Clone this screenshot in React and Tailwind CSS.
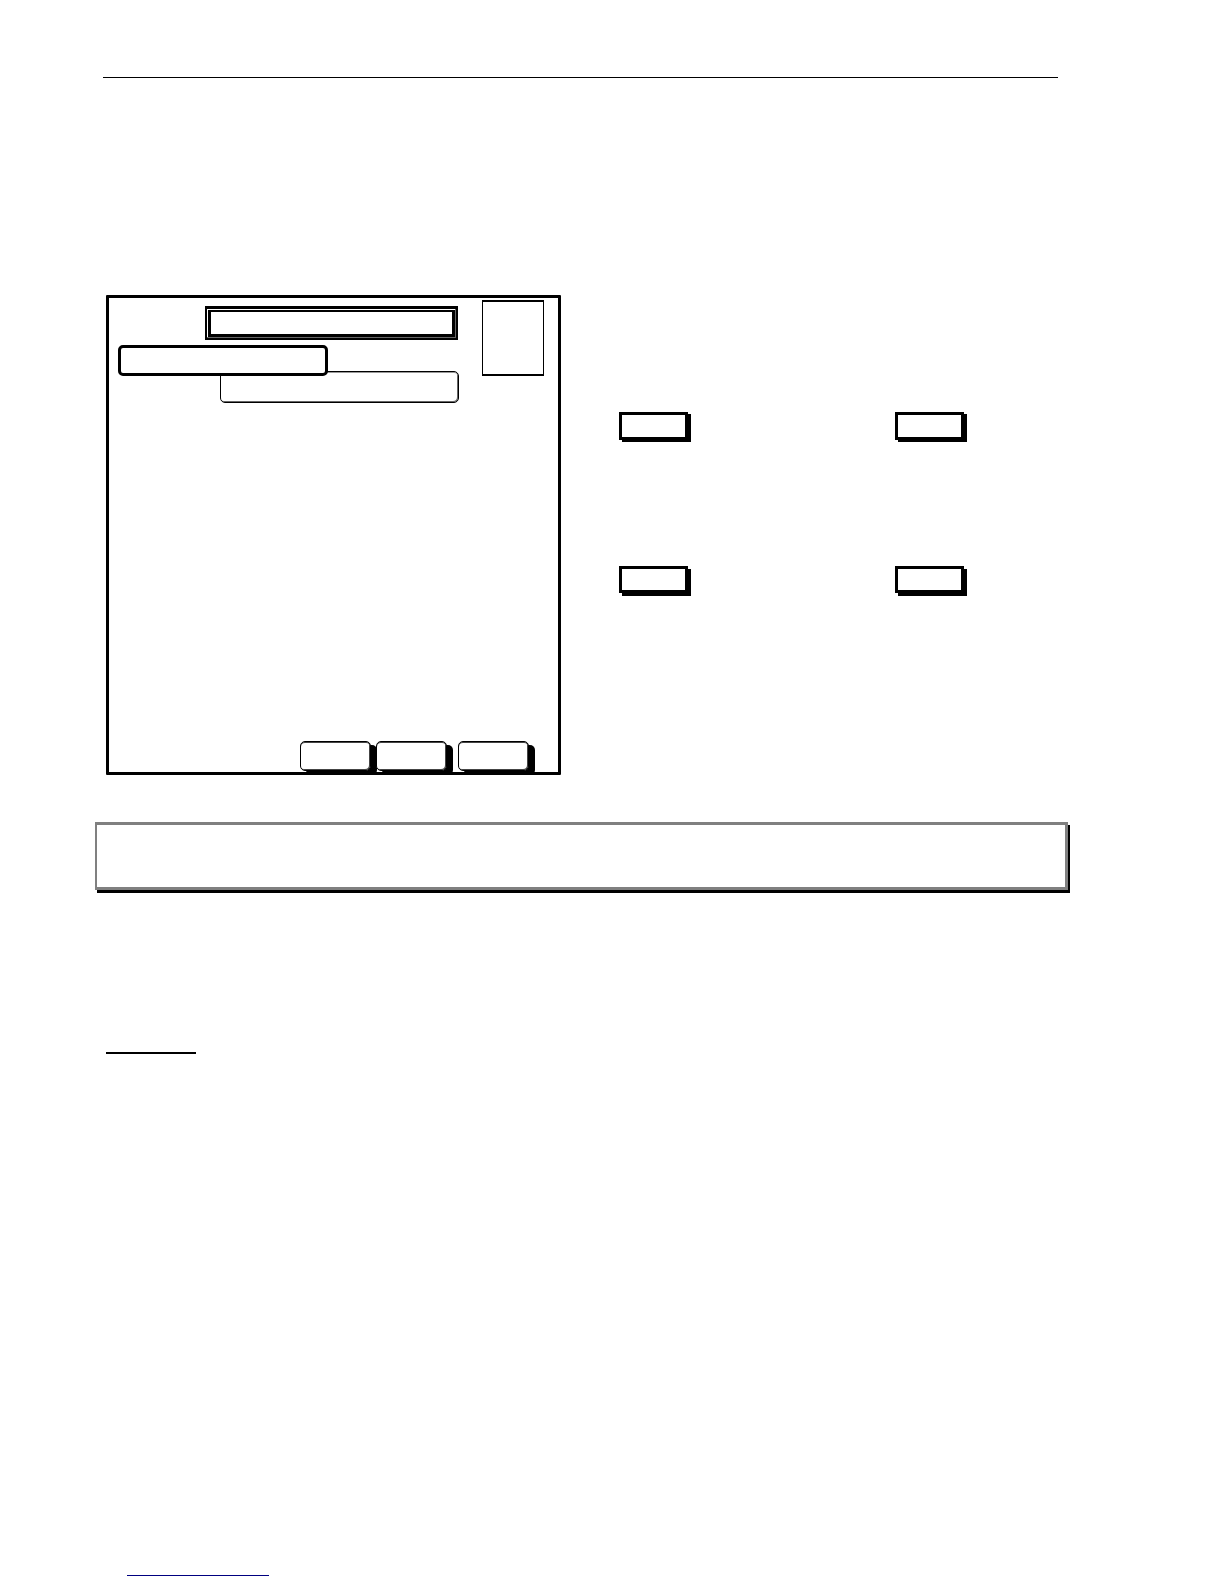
import React from "react";

function Key({ label, className = "" }) {
  return (
    <button
      type="button"
      aria-label={label}
      className={`w-[69px] border-[3px] border-black bg-white ${className}`}
    />
  );
}

function SoftKey({ label, className = "" }) {
  return (
    <button
      type="button"
      aria-label={label}
      className={`h-[30px] w-[71px] rounded-[5px] border border-black bg-white shadow-[6px_4px_0_#000,inset_0_1px_0_#444,inset_-1px_-1px_0_#444] ${className}`}
    />
  );
}

function Display() {
  return (
    <section className="ml-[3px] flex min-h-[480px] w-[455px] flex-col justify-between rounded-[1px] border-[3px] border-black">
      <div className="flex justify-between pt-0.5 pr-3.5">
        <div className="flex flex-col pt-1.5">
          <div className="ml-24 flex h-[34px] w-[253px] border-2 border-t-[3px] border-black p-px shadow-[inset_-1px_-1px_0_#666]">
            <div className="flex-1 border-[3px] border-t-2 border-black bg-white" />
          </div>
          <div className="relative z-10 mt-[5px] ml-[9px] h-[31px] w-[210px] rounded-[5px] border-[3px] border-black bg-white" />
          <div className="-mt-[5px] ml-[111px] h-8 w-[239px] rounded-[5px] border border-black bg-white shadow-[inset_0_1px_0_#999,inset_-1px_-1px_0_#666]" />
        </div>
        <div className="h-[76px] w-[62px] border-x border-y-2 border-black" />
      </div>
      <div className="mr-[29px] mb-px flex justify-end">
        <SoftKey label="Left key" />
        <SoftKey label="Middle key" className="ml-[5px]" />
        <SoftKey label="Right key" className="ml-[11px]" />
      </div>
    </section>
  );
}

export default function App() {
  return (
    <main className="mr-[166px] ml-[103px] bg-white pt-[77px] pb-2 font-['Liberation_Sans',sans-serif]">
      <hr className="h-px border-0 bg-black" />
      <div className="mt-[217px] flex gap-[58px]">
        <Display />
        <div className="grid flex-1 grid-cols-[1fr_163px] content-start gap-y-[126px] pt-[117px]">
          <Key label="Key 1" className="h-7 shadow-[3px_2px_0_#000]" />
          <Key label="Key 2" className="h-7 shadow-[3px_2px_0_#000]" />
          <Key label="Key 3" className="h-[27px] shadow-[3px_3px_0_#000]" />
          <Key label="Key 4" className="h-[27px] shadow-[3px_3px_0_#000]" />
        </div>
      </div>
      <aside className="mt-[47px] -mr-2.5 -ml-2 h-[68px] border-[3px] border-l-2 border-[#808080] shadow-[2px_3px_0_#000]" />
      <hr className="mt-[162px] ml-[3px] h-0.5 w-[90px] border-0 bg-black" />
      <a
        href="#top"
        aria-label="Link"
        className="mt-[513px] ml-6 block h-[9px] w-[142px] border-b border-[#000080]"
      />
    </main>
  );
}
